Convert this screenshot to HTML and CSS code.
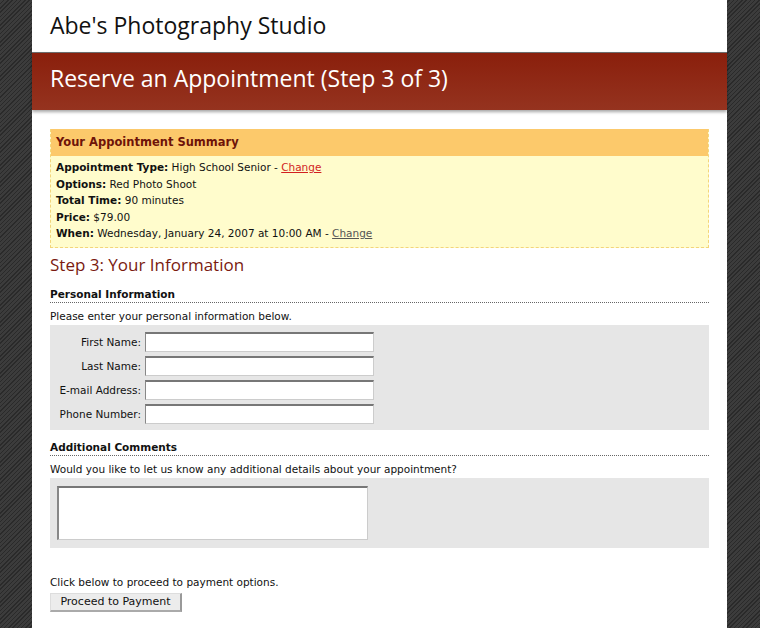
FILE: index.html
```html
<!DOCTYPE html>
<html lang="en">
<head>
    <meta charset="UTF-8">
    <meta name="viewport" content="width=device-width, initial-scale=1.0">
    <title>Abe's Photography Studio - Reserve an Appointment</title>
    <link rel="stylesheet" href="styles.css">
</head>
<body>
    <div class="page">
        <div class="header">
            <h1>Abe's Photography Studio</h1>
        </div>
        <div class="banner">
            <h2>Reserve an Appointment (Step 3 of 3)</h2>
        </div>

        <div class="content">
            <!-- Resumo do agendamento -->
            <div class="summary">
                <h3>Your Appointment Summary</h3>
                <div class="summary-body">
                    <p><b>Appointment Type:</b> High School Senior - <a href="#" class="change-red">Change</a></p>
                    <p><b>Options:</b> Red Photo Shoot</p>
                    <p><b>Total Time:</b> 90 minutes</p>
                    <p><b>Price:</b> $79.00</p>
                    <p><b>When:</b> Wednesday, January 24, 2007 at 10:00 AM - <a href="#" class="change-gray">Change</a></p>
                </div>
            </div>

            <h2 class="step">Step 3: Your Information</h2>

            <h4 class="section-title">Personal Information</h4>
            <p class="intro">Please enter your personal information below.</p>
            <div class="fields">
                <div class="row">
                    <label for="first">First Name:</label>
                    <input type="text" id="first">
                </div>
                <div class="row">
                    <label for="last">Last Name:</label>
                    <input type="text" id="last">
                </div>
                <div class="row">
                    <label for="email">E-mail Address:</label>
                    <input type="text" id="email">
                </div>
                <div class="row">
                    <label for="phone">Phone Number:</label>
                    <input type="text" id="phone">
                </div>
            </div>

            <h4 class="section-title">Additional Comments</h4>
            <p class="intro">Would you like to let us know any additional details about your appointment?</p>
            <div class="fields comments">
                <textarea id="comments"></textarea>
            </div>

            <p class="proceed">Click below to proceed to payment options.</p>
            <button>Proceed to Payment</button>
        </div>
    </div>
</body>
</html>
```

FILE: styles.css
```css
/* Estilos da página */
body {
    font-family: "DejaVu Sans", Verdana, sans-serif;
    font-size: 10.5px;
    color: #111;
    margin: 0;
    padding: 0;
    background-color: #333;
    background-image: repeating-linear-gradient(-45deg, #2a2a2a 0, #2a2a2a 1px, #3c3c3c 1px, #3c3c3c 3px);
}

.page {
    background-color: #fff;
    width: 695px;
    margin-left: 32px;
    min-height: 628px;
}

.header {
    height: 52px;
    padding-left: 18px;
    display: flex;
    align-items: center;
}

h1 {
    font-family: "Open Sans", "DejaVu Sans", sans-serif;
    font-weight: normal;
    font-size: 23px;
    margin: 0 0 2px 0;
    color: #111;
}

.banner {
    height: 57px;
    border-top: 1px solid #6b6b6b;
    background: linear-gradient(#8a1f0c, #95331f);
    box-shadow: 0 2px 3px rgba(0, 0, 0, 0.35);
    padding-left: 18px;
    display: flex;
    align-items: center;
}

.banner h2 {
    font-family: "Open Sans", "DejaVu Sans", sans-serif;
    font-weight: 500;
    font-size: 23px;
    color: #fff;
    margin: 0 0 8px 0;
}

.content {
    padding: 19px 18px 0 18px;
}

.summary {
    border: 1px dashed #f3d57a;
    border-top: none;
    background-color: #fffccc;
}

.summary h3 {
    margin: 0;
    background-color: #fcc96b;
    color: #6e1309;
    font-size: 11.5px;
    padding: 6px 5px 7px 5px;
}

.summary-body {
    padding: 3px 5px 5px 5px;
}

.summary-body p {
    margin: 0;
    line-height: 16.5px;
}

.change-red {
    color: #d21f1f;
}

.change-gray {
    color: #555;
}

.step {
    font-family: "Open Sans", "DejaVu Sans", sans-serif;
    font-weight: normal;
    font-size: 17px;
    color: #7a1a10;
    margin: 5px 0 12px 0;
}

.section-title {
    font-size: 10.5px;
    margin: 0;
    padding-bottom: 2px;
    border-bottom: 1px dotted #666;
}

.intro {
    margin: 7px 0 3px 0;
}

.fields {
    background-color: #e6e6e6;
    padding: 7px 0 6px 0;
    margin-bottom: 11px;
}

.row {
    display: flex;
    align-items: center;
    margin-bottom: 4px;
}

.row:last-child {
    margin-bottom: 0;
}

.row label {
    width: 91px;
    text-align: right;
    padding-right: 4px;
}

input[type="text"] {
    width: 229px;
    height: 20px;
    box-sizing: border-box;
    padding: 0 2px;
    border: 1px solid #ccc;
    border-top: 2px solid #777;
    border-left: 1px solid #888;
    background-color: #fff;
    margin: 0;
}

.comments {
    padding: 8px 7px;
    margin-bottom: 0;
}

textarea {
    display: block;
    width: 311px;
    height: 54px;
    box-sizing: border-box;
    border: 1px solid #ccc;
    border-top: 2px solid #777;
    border-left: 2px solid #888;
    margin: 0;
    resize: none;
}

.proceed {
    margin: 28px 0 5px 0;
}

button {
    font-family: "DejaVu Sans", Verdana, sans-serif;
    font-size: 11px;
    background-color: #ececec;
    color: #111;
    padding: 0 9px;
    border: 1px solid #ddd;
    border-right: 2px solid #999;
    border-bottom: 2px solid #aaa;
    height: 19px;
    width: 132px;
    cursor: pointer;
}
```
